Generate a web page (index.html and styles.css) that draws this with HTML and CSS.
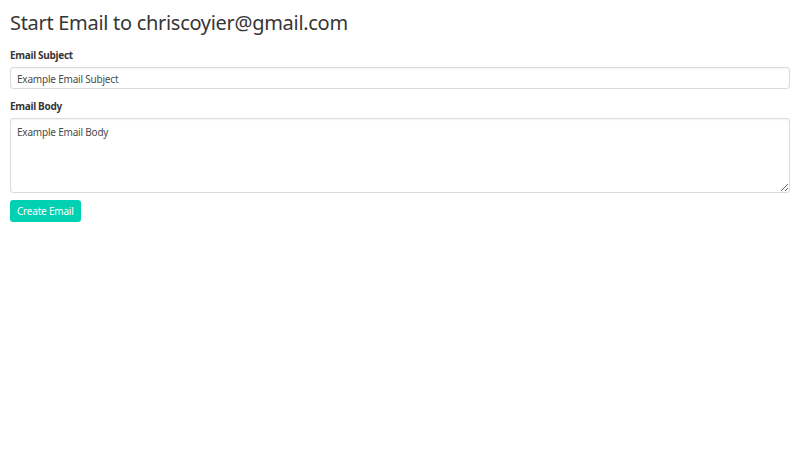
FILE: index.html
```html
<!DOCTYPE html>
<html lang="en">
<head>
<meta charset="utf-8">
<title>Start Email</title>
<link rel="stylesheet" href="styles.css">
</head>
<body>
<main class="page">
  <h1 class="title">Start Email to chriscoyier@gmail.com</h1>
  <form class="form">
    <div class="field">
      <label class="label" for="subject">Email Subject</label>
      <input class="input" id="subject" type="text" value="Example Email Subject">
    </div>
    <div class="field field-last">
      <label class="label" for="body">Email Body</label>
      <textarea class="textarea" id="body">Example Email Body</textarea>
    </div>
    <div class="actions">
      <button class="button" type="button">Create Email</button>
    </div>
  </form>
</main>
</body>
</html>
```

FILE: styles.css
```css
* { box-sizing: border-box; }
html, body { margin: 0; padding: 0; background: #fff; }
body {
  font-family: "Noto Sans", "Open Sans", "DejaVu Sans", sans-serif;
  color: #363636;
}
.page { padding: 10px 10px; }
.title {
  margin: 0;
  font-size: 20px;
  font-weight: 400;
  letter-spacing: -0.3px;
  line-height: 26px;
  color: #363636;
}
.form { margin-top: 12px; display: flex; flex-direction: column; }
.field { display: flex; flex-direction: column; margin-bottom: 10px; }
.field-last { margin-bottom: 7px; }
.label {
  font-size: 10px;
  font-weight: 700;
  letter-spacing: -0.3px;
  line-height: 14px;
  margin-bottom: 5px;
  color: #363636;
}
.input, .textarea {
  font-family: inherit;
  font-size: 10px;
  letter-spacing: -0.2px;
  color: #4a4a4a;
  border: 1px solid #dbdbdb;
  border-radius: 3px;
  background: #fff;
  box-shadow: inset 0 1px 2px rgba(10,10,10,0.06);
  width: 100%;
  margin: 0;
}
.input { height: 22px; padding: 1px 6px 0; }
.textarea { height: 75px; padding: 6px 6px; resize: vertical; line-height: 14px; }
.actions { display: flex; }
.button {
  font-family: inherit;
  font-size: 10px;
  letter-spacing: -0.2px;
  background: #00d1b2;
  color: #fff;
  border: 0;
  border-radius: 3px;
  height: 22px;
  padding: 0 7px;
  cursor: pointer;
}
```
